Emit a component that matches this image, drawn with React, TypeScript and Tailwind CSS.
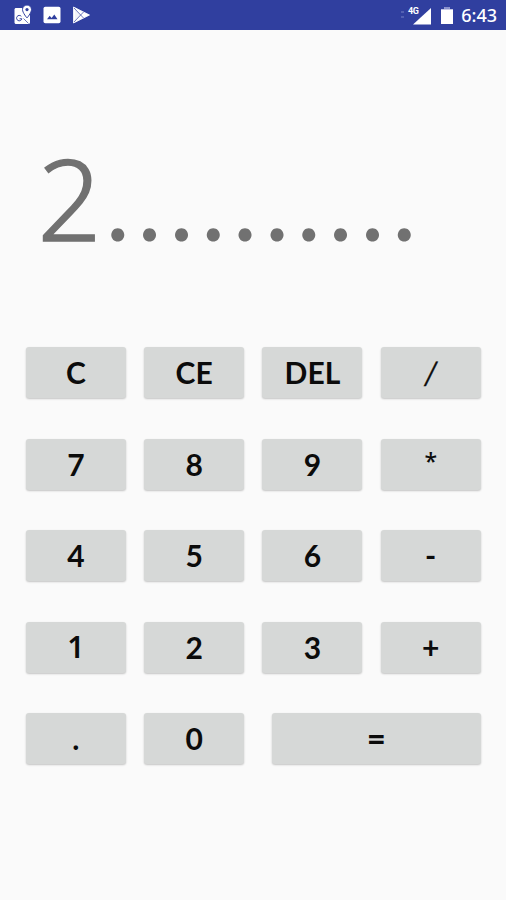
import { useState } from 'react'
import clsx from 'clsx'

interface Key {
  label: string
  wide?: boolean
  className?: string
}

const KEYS: Key[] = [
  { label: 'C' }, { label: 'CE' }, { label: 'DEL' }, { label: '/', className: "font-['Noto_Sans',sans-serif] text-[34px] font-light skew-x-[-7deg] [-webkit-text-stroke:0.4px]" },
  { label: '7' }, { label: '8' }, { label: '9' }, { label: '*', className: "font-['Noto_Sans',sans-serif] text-[23px] font-medium pb-1.5" },
  { label: '4' }, { label: '5' }, { label: '6' }, { label: '-' },
  { label: '1', className: "font-['Noto_Sans',sans-serif] text-[30px] font-semibold" }, { label: '2' }, { label: '3' }, { label: '+' },
  { label: '.' }, { label: '0' }, { label: '=', wide: true, className: "font-['Noto_Sans',sans-serif] text-[30px] font-bold" },
]

function MapIcon() {
  return (
    <svg viewBox="0 0 20 20" className="w-5 h-5" fill="none">
      <path d="M3 3h8l6 5v9.500c0 .8-.7 1.500-1.500 1.500H3c-.8 0-1.500-.7-1.500-1.500v-13C1.500 3.700 2.200 3 3 3z" fill="#fff" />
      <path d="M14 0a4.500 4.500 0 0 0-4.500 4.500c0 3.300 4.500 8.500 4.500 8.500s4.500-5.200 4.500-8.500A4.500 4.500 0 0 0 14 0z" fill="#fff" stroke="#303f9f" strokeWidth="1" />
      <circle cx="14" cy="4.600" r="1.600" fill="#303f9f" />
      <path d="M8.300 11.300a2.700 2.700 0 1 0 .6 2.500H6.600" stroke="#303f9f" strokeWidth="1" />
      <path d="M10.500 13.500l5 5" stroke="#303f9f" strokeWidth=".7" />
    </svg>
  )
}

function ImageIcon() {
  return (
    <svg viewBox="0 0 18 18" className="w-[18px] h-[18px]">
      <rect x=".5" y=".8" width="17" height="16.500" rx="1.800" fill="#fff" />
      <path d="M4 13.300l2.700-3.500 1.900 2.300 2.700-3.500L14.500 13.300z" fill="#303f9f" />
    </svg>
  )
}

function PlayIcon() {
  return (
    <svg viewBox="0 0 18 18" className="w-[18px] h-[18px]">
      <path d="M1.500 1v16L17.500 9z" fill="#fff" stroke="#fff" strokeWidth=".8" strokeLinejoin="round" />
      <path d="M2 2l9.500 10M2 16l9.500-10" stroke="#303f9f" strokeWidth=".7" />
      <path d="M3 3.500v11L8.300 9z" fill="#303f9f" fillOpacity=".06" />
    </svg>
  )
}

function SignalIcon() {
  return (
    <svg viewBox="0 0 32 20" className="w-8 h-5">
      <path d="M1 6h3v2H1zM1 11h3v2H1z" fill="#5360b2" />
      <path d="M31 3v16.500h-18z" fill="#fff" />
      <text x="8" y="9" fill="#fff" fontFamily="Roboto, sans-serif" fontSize="9" fontWeight="700" textLength="11">4G</text>
    </svg>
  )
}

function BatteryIcon() {
  return (
    <svg viewBox="0 0 12 18" className="w-3 h-[18px]">
      <path d="M3.500 1h5v2H12v15H0V3h3.500z" fill="#fff" />
      <path d="M3.500 1h5v2H12v.5H0V3h3.500z" fill="#8890cc" />
    </svg>
  )
}

function StatusBar() {
  return (
    <div className="flex h-[30px] items-center justify-between bg-[#303f9f] pl-[13px] pr-[9px]">
      <div className="flex items-center">
        <MapIcon />
        <div className="ml-[10px]"><ImageIcon /></div>
        <div className="ml-[11px]"><PlayIcon /></div>
      </div>
      <div className="flex items-center">
        <SignalIcon />
        <div className="ml-[9px]"><BatteryIcon /></div>
        <span className="ml-[8px] font-['Noto_Sans',sans-serif] text-[18px] leading-[30px] font-medium text-white">6:43</span>
      </div>
    </div>
  )
}

export default function App() {
  const [display, setDisplay] = useState('2..........')

  const press = (label: string) => {
    if (label === 'C' || label === 'CE') return setDisplay('')
    if (label === 'DEL') return setDisplay((d) => d.slice(0, -1))
    if (label === '=') return
    setDisplay((d) => d + label)
  }

  return (
    <div className="h-[900px] w-[506px] overflow-hidden bg-[#fafafa] font-['Lato','Noto_Sans',sans-serif]">
      <StatusBar />
      <div className="flex h-[317.400px] items-baseline overflow-hidden pl-[37.500px] pt-[93px] whitespace-nowrap leading-[150px] text-[#717171]">
        <span className="font-['Noto_Sans',sans-serif] text-[112px] font-light [-webkit-text-stroke:1.5px]">{display.slice(0, 1)}</span>
        <span className="ml-[4px] text-[104px] tracking-[7.300px]">{display.slice(1)}</span>
      </div>
      <div className="grid grid-cols-[repeat(4,100px)] justify-between gap-y-[40.500px] pl-[25.900px] pr-[25.300px]">
        {KEYS.map(({ label, wide, className }) => (
          <button
            key={label}
            onClick={() => press(label)}
            className={clsx(
              'h-[51px] rounded-[3px] bg-[#d6d8d7] shadow-[0_1px_2px_rgba(0,0,0,0.22)]',
              wide && 'col-span-2 ml-[9.500px]',
            )}
          >
            <span className={clsx('flex h-full items-center justify-center leading-none text-[#0b0b0b]', className ?? 'pb-px text-[30px] font-bold')}>
              {label}
            </span>
          </button>
        ))}
      </div>
    </div>
  )
}
